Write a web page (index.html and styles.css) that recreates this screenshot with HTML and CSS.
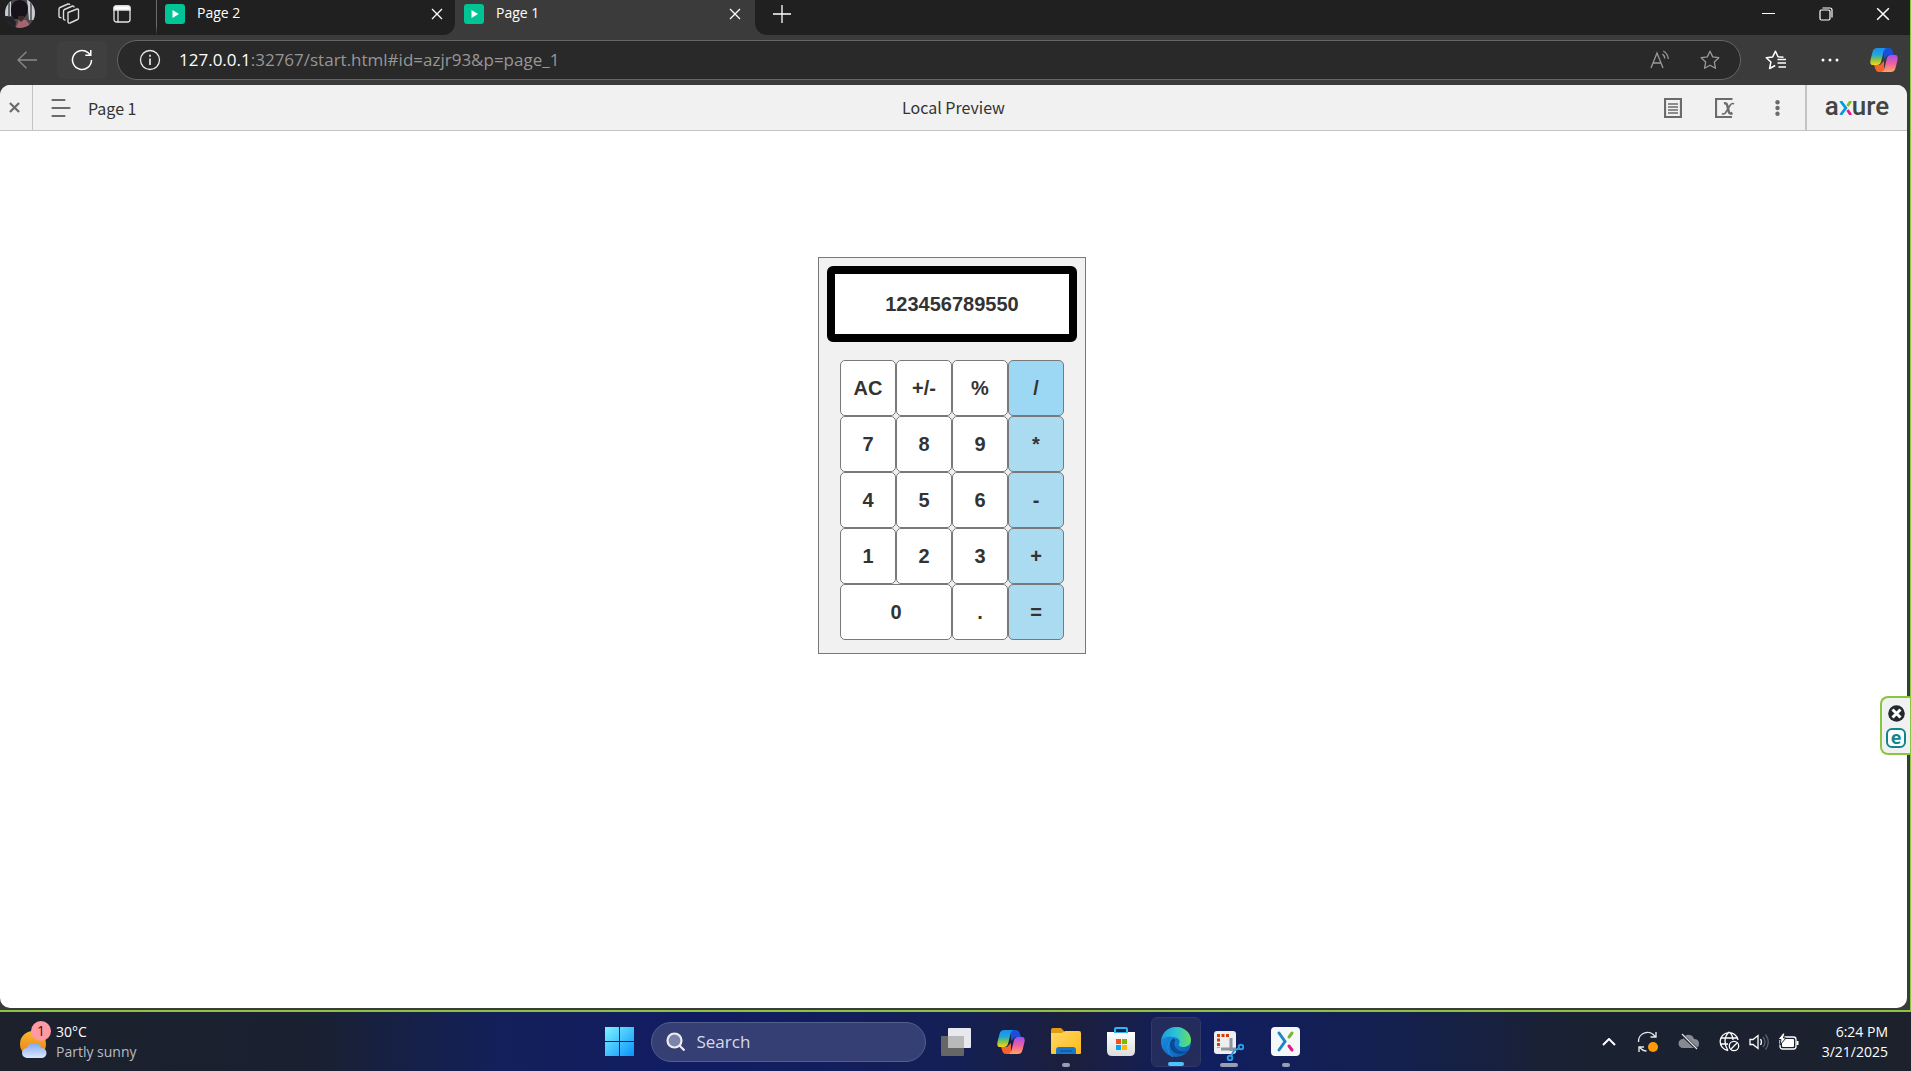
FILE: index.html
```
<!DOCTYPE html>
<html lang="en">
<head>
<meta charset="utf-8">
<title>Page 1</title>
<link rel="stylesheet" href="styles.css">
</head>
<body>
<svg class="defs" aria-hidden="true">
  <defs>
    <linearGradient id="cpA" x1="0" y1="0" x2="0" y2="1"><stop offset="0" stop-color="#1a8df0"/><stop offset=".4" stop-color="#22a7d8"/><stop offset=".7" stop-color="#8cc63f"/><stop offset="1" stop-color="#ffd21f"/></linearGradient>
    <linearGradient id="cpB" x1="0" y1="0" x2="0" y2="1"><stop offset="0" stop-color="#a44df0"/><stop offset=".5" stop-color="#ee5fa0"/><stop offset="1" stop-color="#ffa65a"/></linearGradient>
    <linearGradient id="win" x1="0" y1="0" x2="1" y2="1"><stop offset="0" stop-color="#7df3ff"/><stop offset="1" stop-color="#0a93fb"/></linearGradient>
    <linearGradient id="sun" x1="0" y1="0" x2="0" y2="1"><stop offset="0" stop-color="#f7b92c"/><stop offset="1" stop-color="#ee7a17"/></linearGradient>
    <linearGradient id="cloud" x1="0" y1="0" x2="0" y2="1"><stop offset="0" stop-color="#7fa8ee"/><stop offset="1" stop-color="#dbe9ff"/></linearGradient>
    <linearGradient id="folder" x1="0" y1="0" x2="1" y2="1"><stop offset="0" stop-color="#ffd968"/><stop offset="1" stop-color="#fdb91a"/></linearGradient>
    <linearGradient id="paper" x1="0" y1="0" x2="0" y2="1"><stop offset="0" stop-color="#fff"/><stop offset="1" stop-color="#dcdcdc"/></linearGradient>
    <linearGradient id="edgeTop" x1="0" y1="0" x2="1" y2="0"><stop offset="0" stop-color="#1e9be0"/><stop offset=".5" stop-color="#2dc3d6"/><stop offset="1" stop-color="#66e05c"/></linearGradient>
    <linearGradient id="edgeLow" x1="0" y1="0" x2="1" y2="1"><stop offset="0" stop-color="#1a93e6"/><stop offset="1" stop-color="#0b5cb5"/></linearGradient>
    <symbol id="copilot" viewBox="0 0 28 26">
      <path d="M14 1h5c2 0 3 1 4 4l1 3h-6l-4 4z" fill="#1b4fd6"/>
      <path d="M14 25H9c-2 0-3-1-4-4l-1-3h6l4-4z" fill="#f4622f"/>
      <path d="M7 1h10c-2 0-3 2-3.500 4L11 15c-.6 2-2 3-4 3H3c-2.500 0-3-2-2.500-5L2.500 5C3.200 2 5 1 7 1z" fill="url(#cpA)"/>
      <path d="M21 25H11c2 0 3-2 3.500-4L17 11c.6-2 2-3 4-3h4c2.500 0 3 2 2.500 5l-2 8c-.7 3-2.500 4-4.500 4z" fill="url(#cpB)"/>
    </symbol>
    <symbol id="play" viewBox="0 0 20 20"><rect width="20" height="20" rx="3" fill="#00c396"/><path d="M7.500 6l6.500 4-6.500 4z" fill="#fff"/></symbol>
    <symbol id="cross" viewBox="0 0 12 12"><path d="M1 1l10 10M11 1L1 11" fill="none" stroke="currentColor" stroke-width="1.300"/></symbol>
    <symbol id="star" viewBox="0 0 20 20"><path d="M10 1.200l2.700 5.700 6.100.8-4.500 4.300 1.200 6.300-5.500-3-5.500 3L5.700 12 1.200 7.700l6.100-.8z" fill="none" stroke="currentColor" stroke-width="1.300" stroke-linejoin="round"/></symbol>
  </defs>
</svg>

<div class="screen">
  <div class="browser">
    <div class="tabstrip">
      <button class="profile" aria-label="Profile">
        <svg width="30" height="30" viewBox="0 0 30 30"><defs><clipPath id="round"><circle cx="15" cy="13" r="15"/></clipPath></defs><g clip-path="url(#round)"><rect width="30" height="30" fill="#4a484c"/><path d="M0 0h6v16H0zM22 0h8v20h-6z" fill="#c9ccd2"/><path d="M3 0h2v18H3zM25 0h2v20h-2z" fill="#6c6e74"/><path d="M6 10q0-9 8-10 8 0 9 8 0 9-7 11H9q-3-3-3-9z" fill="#17131a"/><path d="M0 16l7 1 4 5-1 8H0z" fill="#232126"/><path d="M8 30q5-4 6-11l7 1 5 6-3 4z" fill="#a5656f"/><path d="M13 19l3 3 3-3v-3h-6z" fill="#3a2a2a"/></g></svg>
      </button>
      <button class="strip-btn" aria-label="Workspaces">
        <svg width="22" height="22" viewBox="0 0 22 22" fill="none" stroke="#dcdcdc" stroke-width="1.400" stroke-linejoin="round"><path d="M10 9.500l9-3.500q1.500-.3 1.500 1.200V15q0 1-1 1.500L12 20q-2 .5-2-1.200z"/><path d="M7.500 17q-2 .3-2-1.500V8q0-1 1-1.500L14.500 3q1.500-.3 1.500 1.500"/><path d="M3.500 14.500Q1 15 1 13V6q0-1 1-1.500L10 1q1.500-.3 1.700 1"/></svg>
      </button>
      <button class="strip-btn tabs-btn" aria-label="Tab actions">
        <svg width="18" height="18" viewBox="0 0 18 18" fill="none" stroke="#e6e6e6" stroke-width="1.300"><rect x="1" y="1" width="16" height="16" rx="2.500"/><path d="M1 4V3q0-2 2-2h12q2 0 2 2v2H1z" fill="#fff"/><path d="M5 5v12"/></svg>
      </button>
      <span class="divider"></span>
      <div class="tab">
        <svg width="20" height="20"><use href="#play"/></svg>
        <a class="tab-name" href="#page_2">Page 2</a>
        <button class="tab-close" aria-label="Close Page 2"><svg width="12" height="12"><use href="#cross"/></svg></button>
      </div>
      <div class="tab active">
        <svg width="20" height="20"><use href="#play"/></svg>
        <a class="tab-name" href="#page_1">Page 1</a>
        <button class="tab-close" aria-label="Close Page 1"><svg width="12" height="12"><use href="#cross"/></svg></button>
      </div>
      <div class="strip-rest">
        <button class="new-tab" aria-label="New tab"><svg width="18" height="18" viewBox="0 0 18 18"><path d="M9 0v18M0 9h18" stroke="#fff" stroke-width="1.300"/></svg></button>
        <div class="window-btns">
          <button aria-label="Minimize"><svg width="14" height="14" viewBox="0 0 14 14"><path d="M0 6.500h13" stroke="#fff"/></svg></button>
          <button aria-label="Restore"><svg width="14" height="14" viewBox="0 0 14 14" fill="none" stroke="#fff" stroke-width="1.200"><rect x="1" y="3" width="10" height="10" rx="1.500"/><path d="M3.500 1H11q2 0 2 2v7.500"/></svg></button>
          <button aria-label="Close window"><svg width="14" height="14" viewBox="0 0 12 12"><use href="#cross"/></svg></button>
        </div>
      </div>
    </div>

    <div class="toolbar">
      <button class="nav-btn back" aria-label="Back"><svg width="20" height="18" viewBox="0 0 20 18" fill="none" stroke="#8a8a8a" stroke-width="1.300"><path d="M20 9H1M9.500 .7L1 9l8.500 8.300"/></svg></button>
      <button class="nav-btn reload" aria-label="Refresh"><svg width="22" height="22" viewBox="0 0 22 22" fill="none" stroke="#fff" stroke-width="1.500"><path d="M20.500 11A9.500 9.500 0 1 1 17 3.600l2.500 2.600M19.800 1v5.300h-5.500"/></svg></button>
      <div class="omnibox">
        <svg width="22" height="22" viewBox="0 0 22 22" fill="none" stroke="#e8e8e8" stroke-width="1.300"><circle cx="11" cy="11" r="9.500"/><path d="M11 9.500V16M11 5.800v2" stroke-width="1.700"/></svg>
        <a class="url" href="#page_1"><span class="host">127.0.0.1</span>:32767/start.html#id=azjr93&amp;p=page_1</a>
        <button class="box-btn" aria-label="Read aloud"><svg width="20" height="20" viewBox="0 0 20 20" fill="none" stroke="#9a9a9a" stroke-width="1.300"><path d="M1 18L7 3l6 15M3 13h8M12.500 4q2 1.500 2.300 4.500M13.300 1q4.500 2.500 5 8"/></svg></button>
        <button class="box-btn" aria-label="Favorite this page"><svg class="dim" width="20" height="20"><use href="#star"/></svg></button>
      </div>
      <button class="tool-btn" aria-label="Favorites"><svg width="22" height="20" viewBox="0 0 22 20" fill="none" stroke="#fff" stroke-width="1.500" stroke-linejoin="round"><path d="M18.500 7.300L13 6.800 10.500 1.200 7.700 6.900 1.200 7.700l4.700 4.300-1.300 6.500 5.600-3"/><path d="M12.500 9.500H21M12.500 13H21M13.500 17H21"/></svg></button>
      <button class="tool-btn" aria-label="Settings and more"><svg width="18" height="4" viewBox="0 0 18 4" fill="#fff"><circle cx="2" cy="2" r="1.500"/><circle cx="9" cy="2" r="1.500"/><circle cx="16" cy="2" r="1.500"/></svg></button>
      <button class="tool-btn" aria-label="Copilot"><svg width="28" height="26"><use href="#copilot"/></svg></button>
    </div>

    <div class="page">
      <header class="player">
        <div class="player-left">
          <button class="player-close" aria-label="Close player"><svg width="11" height="11" viewBox="0 0 12 12"><path d="M1 1l10 10M11 1L1 11" stroke="#6b6b6b" stroke-width="2.400"/></svg></button>
          <button class="player-menu" aria-label="Pages"><svg width="20" height="20" viewBox="0 0 20 20" stroke="#6b6b6b" stroke-width="2.200" stroke-linecap="round"><path d="M1.500 2h12M1.500 10h17M1.500 18h12"/></svg></button>
          <span class="player-page">Page 1</span>
        </div>
        <h1 class="player-title">Local Preview</h1>
        <div class="player-right">
          <div class="player-tools">
            <button aria-label="Documentation"><svg width="18" height="20" viewBox="0 0 18 20" fill="none" stroke="#6b6b6b" stroke-width="2.200"><path d="M1 1h16v18H1z"/><path d="M4 6h10M4 9h10M4 12h10M4 15h10" stroke-width="1.700"/></svg></button>
            <button aria-label="Variables"><svg width="20" height="20" viewBox="0 0 20 20" fill="none" stroke="#6b6b6b" stroke-width="2.200"><path d="M17.500 1H1v18h16"/><path d="M9 5.500q2.500-1 3.300 2l1.400 6q.6 3 3.800 1.500" stroke-width="2.500"/><path d="M19 6q-2-1.500-4 1.500l-4 6.500q-1.700 3-4 1.500" stroke-width="1.600"/></svg></button>
            <button class="more" aria-label="More options"><svg width="5" height="16" viewBox="0 0 5 16" fill="#6b6b6b"><circle cx="2.500" cy="2.200" r="2.200"/><circle cx="2.500" cy="8" r="2.200"/><circle cx="2.500" cy="13.800" r="2.200"/></svg></button>
          </div>
          <a class="brand" href="#axure" aria-label="axure"><span>a</span><svg width="13" height="14" viewBox="0 0 13 14" fill="none" stroke-width="2.800"><path d="M1.500 0l5.300 7-5.300 7" stroke="#009cd9"/><path d="M11.800 0L8.500 5" stroke="#7bc21d"/><path d="M11.800 14l-3.300-5" stroke="#e8178b"/></svg><span>ure</span></a>
        </div>
      </header>

      <main class="canvas">
        <section class="calculator">
          <output class="display">123456789550</output>
          <div class="keys">
            <button>AC</button><button>+/-</button><button>%</button><button class="op hover">/</button>
            <button>7</button><button>8</button><button>9</button><button class="op">*</button>
            <button>4</button><button>5</button><button>6</button><button class="op">-</button>
            <button>1</button><button>2</button><button>3</button><button class="op">+</button>
            <button class="wide">0</button><button>.</button><button class="op">=</button>
          </div>
        </section>
      </main>
    </div>
    <aside class="side-tab">
      <button aria-label="Dismiss"><svg width="17" height="17" viewBox="0 0 17 17"><circle cx="8.500" cy="8.500" r="8.300" fill="#23272e"/><path d="M4.500 4.500l8 8M12.500 4.500l-8 8" stroke="#fff" stroke-width="3"/></svg></button>
      <button class="e-badge">e</button>
    </aside>
  </div>

  <footer class="taskbar">
    <button class="weather">
      <span class="weather-icon">
        <svg width="28" height="28" viewBox="0 0 28 28"><circle cx="13" cy="13" r="13" fill="url(#sun)"/><path d="M7 27a5 5 0 0 1 0-10q1-5 7-5t7 5a5 5 0 0 1 1 10z" fill="url(#cloud)"/></svg>
        <span class="count">1</span>
      </span>
      <span class="weather-text"><span class="temp">30°C</span><span>Partly sunny</span></span>
    </button>
    <nav class="apps">
      <button class="app" aria-label="Start"><svg width="29" height="29" viewBox="0 0 29 29"><path d="M0 0h14v14H0zM15 0h14v14H15zM0 15h14v14H0zM15 15h14v14H15z" fill="url(#win)"/></svg></button>
      <label class="search"><svg width="20" height="20" viewBox="0 0 20 20" fill="#7d84ac" stroke="#eee" stroke-width="2.200"><circle cx="8.500" cy="8.500" r="7"/><path d="M13.500 13.500l5 5"/></svg><input type="text" aria-label="Search" placeholder="Search"></label>
      <button class="app" aria-label="Task view"><svg width="30" height="28" viewBox="0 0 30 28"><rect y="8" width="23" height="20" rx="1" fill="#666"/><rect x="7" width="23" height="20" rx="1" fill="#fff" fill-opacity=".9"/><path d="M7 8h16v12H7z" fill="#b9b9b9"/></svg></button>
      <button class="app" aria-label="Copilot"><svg width="28" height="26"><use href="#copilot"/></svg></button>
      <button class="app running" aria-label="File Explorer"><svg width="30" height="27" viewBox="0 0 30 27"><path d="M0 2q0-2 2-2h8l3 3v6H0z" fill="#e09c12"/><path d="M0 5h11l3-2h14q2 0 2 2v20q0 1-1 1H1q-1 0-1-1z" fill="url(#folder)"/><path d="M5 26v-4q0-3 3-3h14q3 0 3 3v4z" fill="#1877c9"/><path d="M9 23h12" stroke="#0b4d92"/></svg></button>
      <button class="app" aria-label="Store"><svg width="30" height="30" viewBox="0 0 30 30"><path d="M9 6V2q0-1 1-1h10q1 0 1 1v4" fill="none" stroke="#30b4f0" stroke-width="2"/><path d="M1 5h28v19q0 5-5 5H6q-5 0-5-5z" fill="url(#paper)"/><path d="M8 6V5h14v1z" fill="#30b4f0"/><path d="M10 12h5v5h-5z" fill="#f25022"/><path d="M16 12h5v5h-5z" fill="#7fba00"/><path d="M10 18h5v5h-5z" fill="#00a4ef"/><path d="M16 18h5v5h-5z" fill="#ffb900"/></svg></button>
      <button class="app current" aria-label="Edge"><svg width="30" height="30" viewBox="0 0 30 30"><circle cx="15" cy="15" r="15" fill="url(#edgeLow)"/><path d="M.3 13C1.500 5 8 0 15 0c9 0 15 6.500 15 13 0 5-4 7-7.500 7S17 18.500 18 17c2-3-.5-7-6-7C6 9 1.500 11 .3 13z" fill="url(#edgeTop)"/><path d="M12 11c-5 4-4 12 2 15 5 2.500 10 .5 13-2.500-3 1.500-8 1.500-11-1.500-3-2.700-3.500-6-1.500-9z" fill="#0c4a94"/><path d="M12 30c-6-3-8-14 1-20" fill="none" stroke="#1a93e6"/></svg></button>
      <button class="app running wide-mark" aria-label="Snipping Tool"><svg class="snip" width="30" height="30" viewBox="0 0 30 30"><rect width="22" height="23" rx="3" fill="#eceef0"/><path d="M15 4.500H4.500V17" fill="none" stroke="#d83b01" stroke-width="3" stroke-dasharray="3 1.500"/><path d="M17 7v13M7 18h15" stroke="#8e959c" stroke-width="3"/><g fill="none" stroke="#2a9de0" stroke-width="2"><circle cx="27" cy="16" r="2.300"/><circle cx="16" cy="27" r="2.300"/><path d="M25 17.500l-5 2-3 5.500"/></g></svg></button>
      <button class="app running" aria-label="Axure RP"><svg width="29" height="29" viewBox="0 0 29 29"><rect width="29" height="29" rx="4" fill="#f6f7f8"/><g fill="none" stroke-width="3" stroke-linecap="round"><path d="M8 6l6 8.500L8 23" stroke="#1b87c6"/><path d="M21 6l-3 4" stroke="#76b82a"/><path d="M21 23l-3-4" stroke="#e01a84"/></g></svg></button>
    </nav>
    <div class="tray">
      <button class="chevron" aria-label="Show hidden icons"><svg width="14" height="8" viewBox="0 0 14 8"><path d="M1 7l6-6 6 6" fill="none" stroke="#fff" stroke-width="2"/></svg></button>
      <button aria-label="Update"><svg width="22" height="22" viewBox="0 0 22 22" fill="none" stroke="#e6e6e6" stroke-width="1.400"><path d="M1.500 11A9 9 0 0 1 18 5.500M19 1v5h-5.500M2 21v-5h5M2.500 16q3 4 7 4"/><circle cx="16" cy="16" r="5" fill="#ff9a0a" stroke="none"/></svg></button>
      <button aria-label="OneDrive"><svg width="22" height="18" viewBox="0 0 22 18"><path d="M5 15a4.500 4.500 0 0 1 0-9q2-5 7-4 3 .5 4 4 5 0 5 4.500T17 15z" fill="#858a93"/><path d="M3 1l16 15" stroke="#1c212c" stroke-width="3"/><path d="M4 1l15 15" stroke="#e6e6e6" stroke-width="1.300"/></svg></button>
      <button class="system" aria-label="Network, volume and battery">
        <svg width="21" height="21" viewBox="0 0 21 21" fill="none" stroke="#fff" stroke-width="1.300"><path d="M9 19.500A9 9 0 1 1 19 9M1.500 7h17M1.500 13H9M10 1q-4 4-4 9t3 9.500M10 1q4 3 4 8"/><circle cx="15" cy="15" r="4.700"/><path d="M12 18l6-6"/></svg>
        <svg width="20" height="18" viewBox="0 0 20 18" fill="none" stroke="#fff" stroke-width="1.300"><path d="M1 6.500h3L9 2.500v13l-5-4H1z"/><path d="M11.500 6q2 3 0 6"/><path d="M14 4q4 5 0 10M16.500 1.500q5.500 7.500 0 15" stroke="#596070"/></svg>
        <svg width="21" height="18" viewBox="0 0 21 18"><rect x="2" y="4" width="16" height="12" rx="2.500" fill="none" stroke="#fff" stroke-width="1.300"/><rect x="4" y="6" width="12" height="8" rx="1" fill="#fff"/><path d="M18.500 8h2v4h-2z" fill="#fff"/><path d="M5 0L0 6.500h3L2 12l6-7H5.500L7 0z" fill="#fff" stroke="#1c212c"/></svg>
      </button>
      <button class="clock"><span>6:24 PM</span><span>3/21/2025</span></button>
    </div>
  </footer>
</div>
</body>
</html>
```
FILE: styles.css
```
* { box-sizing: border-box; }
body {
  margin: 0;
  font-family: "Open Sans", "Noto Sans", sans-serif;
  font-size: 15px;
  color: #fff;
}
button {
  display: flex;
  align-items: center;
  justify-content: center;
  padding: 0;
  border: 0;
  background: none;
  color: inherit;
  font: inherit;
}
a { color: inherit; text-decoration: none; }
svg { display: block; flex: none; }
.defs { position: absolute; width: 0; height: 0; }

.screen { display: flex; flex-direction: column; min-height: 100vh; }
.browser {
  position: relative;
  flex: 1;
  display: flex;
  flex-direction: column;
  background: #3b3b3b;
  border-right: 1px solid #8bc53f;
  border-bottom: 2px solid #8bc53f;
}

/* tab strip */
.tabstrip { display: flex; height: 35px; background: #3b3b3b; }
.tabstrip > * { background: #202020; }
.profile { width: 40px; align-items: flex-start; }
.strip-btn { width: 58px; padding-bottom: 8px; }
.tabs-btn { width: 48px; }
.divider { width: 11px; border-right: 1px solid #6b6b6b; border-bottom: 9px solid #202020; }
.tab {
  display: flex;
  align-items: center;
  gap: 12px;
  width: 298px;
  padding: 0 12px 7px 8px;
  border-bottom-right-radius: 12px;
  font-size: 14px;
}
.tab.active { width: 300px; padding: 0 14px 7px 9px; background: #3b3b3b; }
.tab-name { flex: 1; padding-bottom: 2px; line-height: 20px; }
.tab-close { width: 12px; height: 20px; }
.strip-rest {
  flex: 1;
  display: flex;
  justify-content: space-between;
  padding: 0 20px 8px 18px;
  border-bottom-left-radius: 12px;
}
.window-btns { display: flex; gap: 43px; }

/* address bar */
.toolbar { display: flex; align-items: center; height: 50px; padding-right: 12px; }
.nav-btn { width: 50px; height: 38px; margin-left: 2px; border-radius: 6px; }
.reload { margin: 0 10px 0 5px; background: #3f3f3f; }
.omnibox {
  flex: 1;
  display: flex;
  align-items: center;
  height: 40px;
  padding: 0 20px 0 21px;
  border: 1px solid #666;
  border-radius: 20px;
  background: #292929;
}
.url { flex: 1; margin-left: 18px; padding-bottom: 2px; font-size: 17px; color: #979797; }
.host { color: #fff; }
.box-btn { margin-left: 30px; }
.dim { color: #9a9a9a; }
.tool-btn { min-width: 28px; margin-left: 21px; }
.tool-btn + .tool-btn { margin-left: 26px; }

/* prototype player */
.page {
  flex: 1;
  display: flex;
  flex-direction: column;
  margin: 0 3px 2px 0;
  border-radius: 10px;
  overflow: hidden;
  background: #fff;
  color: #333;
}
.player {
  display: grid;
  grid-template-columns: 1fr auto 1fr;
  align-items: center;
  height: 46px;
  border-bottom: 1px solid #c4c4c4;
  background: #f1f1f1;
  font: 16px/24px "Noto Sans CJK SC", sans-serif;
}
.player-left, .player-right, .player-tools { display: flex; align-items: center; }
.player-right { justify-content: flex-end; }
.player-close { width: 33px; height: 45px; padding-right: 4px; border-right: 1px solid #c4c4c4; }
.player-menu { width: 20px; margin: 0 17px 0 18px; }
.player-title { margin: 0; padding-bottom: 2px; font-size: 16px; font-weight: 400; }
.player-tools { gap: 33px; padding-right: 18px; }
.more { width: 19px; }
.brand {
  display: flex;
  align-items: baseline;
  justify-content: center;
  width: 102px;
  height: 45px;
  padding-top: 8px;
  border-left: 2px solid #c4c4c4;
  font: 500 26px/26px Roboto, sans-serif;
  color: #444;
}

/* calculator */
.canvas { flex: 1; display: flex; justify-content: center; align-items: flex-start; padding: 126px 3px 0 0; }
.calculator {
  display: flex;
  flex-direction: column;
  align-items: center;
  gap: 18px;
  padding: 8px 8px 13px;
  border: 1px solid #797979;
  background: #f1f1f1;
  font: bold 20px "Liberation Sans", sans-serif;
}
.display {
  display: flex;
  align-items: center;
  justify-content: center;
  width: 250px;
  height: 76px;
  border: 8px solid #000;
  border-radius: 6px;
  background: #fff;
}
.keys { display: grid; grid-template-columns: repeat(4, 56px); grid-auto-rows: 56px; }
.keys button { border: 1px solid #797979; border-radius: 5px; background: #fff; }
.keys .wide { grid-column: span 2; }
.keys .op { background: #abdbf1; }
.keys .hover { background: #9cd7f3; }

.side-tab {
  position: absolute;
  right: 0;
  bottom: 255px;
  display: flex;
  flex-direction: column;
  align-items: center;
  gap: 6px;
  width: 30px;
  padding: 7px 0 5px;
  border: 2px solid #8bc53f;
  border-right: 0;
  border-radius: 8px 0 0 8px;
  background: #f1f1f1;
}
.side-tab .e-badge {
  width: 20px;
  height: 20px;
  padding-bottom: 3px;
  border: 2px solid #12848c;
  border-radius: 6px;
  background: #fff;
  color: #12848c;
  font: bold 18px/16px "Open Sans", sans-serif;
}

/* taskbar */
.taskbar {
  display: grid;
  grid-template-columns: 1fr auto 1fr;
  align-items: center;
  height: 59px;
  background: linear-gradient(90deg, #1c212c 0, #1a2030 16%, #13205a 26%, #111d62 36%, #141f55 50%, #1c1f3c 56%, #111e60 63%, #14204e 73%, #1a2132 82%, #1c212c 100%);
  font-size: 14px;
  line-height: 20px;
}
.weather { justify-self: start; gap: 8px; padding-left: 20px; color: #b9bcc2; }
.weather-icon { position: relative; padding-top: 6px; }
.count {
  position: absolute;
  top: -4px;
  left: 11px;
  width: 20px;
  height: 20px;
  border-radius: 10px;
  background: #ff99a4;
  color: #222;
}
.weather-text, .clock { display: flex; flex-direction: column; align-items: flex-start; }
.temp { color: #fff; }
.apps { display: flex; align-items: center; gap: 5px; padding-right: 6px; }
.app { position: relative; width: 50px; height: 50px; border-radius: 6px; }
.search {
  display: flex;
  align-items: center;
  gap: 11px;
  width: 275px;
  height: 40px;
  margin-left: 1px;
  padding-left: 14px;
  border: 1px solid #535e8c;
  border-radius: 20px;
  background: #353f74;
}
.search input { width: 180px; padding: 0; border: 0; background: none; color: #fff; font: 17px "Open Sans", sans-serif; }
.search input::placeholder { color: #d8dae6; opacity: 1; }
.current { background: #232c5a; border: 1px solid #303a68; }
.running::after, .current::after {
  content: "";
  position: absolute;
  bottom: 0;
  width: 8px;
  height: 4px;
  border-radius: 2px;
  background: #9a9eb4;
}
.current::after { width: 16px; background: #4cc2ff; }
.wide-mark::after { width: 18px; }
.wide-mark { padding: 8px 4px 0 0; }
.snip { position: relative; z-index: 1; }
.tray { justify-self: end; display: flex; align-items: center; gap: 19px; padding-right: 23px; }
.chevron { width: 18px; }
.system { gap: 9px; }
.clock { align-items: flex-end; margin-left: 4px; }
```
